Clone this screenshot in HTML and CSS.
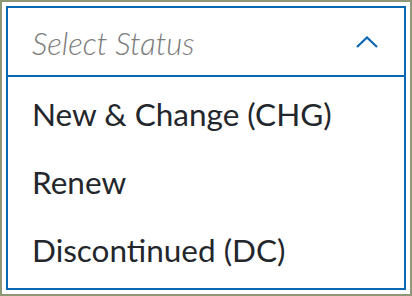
FILE: index.html
```html
<!DOCTYPE html>
<html>
<head>
<meta charset="utf-8">
<link rel="stylesheet" href="styles.css">
</head>
<body>
<div class="frame">
  <div class="dropdown">
    <div class="select">
      <span class="placeholder">Select Status</span>
      <svg class="chevron" width="22" height="12" viewBox="0 0 22 12"><path d="M1 11 L11 1.5 L21 11" fill="none" stroke="#0a67b2" stroke-width="2.2"/></svg>
    </div>
    <ul class="options">
      <li>New &amp; Change (CHG)</li>
      <li>Renew</li>
      <li>Discontinued (DC)</li>
    </ul>
  </div>
</div>
</body>
</html>
```
FILE: styles.css
```css
html, body { margin: 0; padding: 0; background: #fff; }
.frame {
  width: 412px; height: 296px; box-sizing: border-box;
  border: 2px solid #8e9878; padding: 4px; background: #fff;
  font-family: Lato, "Noto Sans", sans-serif;
}
.dropdown {
  height: 100%; box-sizing: border-box;
  border: 2px solid #0a67b2;
  display: flex; flex-direction: column;
}
.select {
  height: 69px; box-sizing: border-box;
  border-bottom: 2px solid #0a67b2;
  display: flex; align-items: center; justify-content: space-between;
  padding: 3px 24px 0 24px;
}
.placeholder { font-style: italic; font-weight: 300; font-size: 31px; color: #7b7b7b; }
.chevron { display: block; margin-right: 2px; margin-top: -3px; }
.options {
  list-style: none; margin: 0; padding: 3px 0 0 0; flex: 1;
  display: flex; flex-direction: column;
}
.options li { font-size: 31.5px; line-height: 68px; height: 68px; color: #23272c; padding-left: 24px; }
```
